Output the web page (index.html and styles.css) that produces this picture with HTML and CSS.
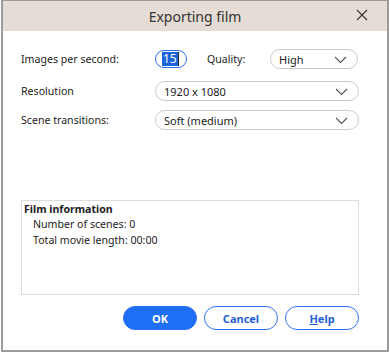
FILE: index.html
```html
<!DOCTYPE html>
<html>
<head>
<meta charset="utf-8">
<link rel="stylesheet" href="styles.css">
</head>
<body>
<div class="dialog">
  <div class="titlebar">
    <span class="title">Exporting film</span>
    <svg class="close" width="12" height="12" viewBox="0 0 12 12"><path d="M1 1L11 11M11 1L1 11" stroke="#333" stroke-width="1.1" fill="none"/></svg>
  </div>
  <div class="content">
    <div class="row first">
      <span class="label">Images per second:</span>
      <div class="fps"><span class="sel">15</span><span class="caret"></span></div>
      <span class="qlabel">Quality:</span>
      <div class="select small"><span>High</span><svg class="chev" width="13" height="8" viewBox="0 0 13 8"><path d="M1 1L6.5 6.5L12 1" stroke="#555" stroke-width="1.1" fill="none"/></svg></div>
    </div>
    <div class="row">
      <span class="label">Resolution</span>
      <div class="select wide"><span>1920 x 1080</span><svg class="chev" width="13" height="8" viewBox="0 0 13 8"><path d="M1 1L6.5 6.5L12 1" stroke="#555" stroke-width="1.1" fill="none"/></svg></div>
    </div>
    <div class="row">
      <span class="label">Scene transitions:</span>
      <div class="select wide"><span>Soft (medium)</span><svg class="chev" width="13" height="8" viewBox="0 0 13 8"><path d="M1 1L6.5 6.5L12 1" stroke="#555" stroke-width="1.1" fill="none"/></svg></div>
    </div>
    <div class="info">
      <div class="info-title">Film information</div>
      <div class="info-line">Number of scenes: 0</div>
      <div class="info-line">Total movie length: 00:00</div>
    </div>
    <div class="buttons">
      <button class="btn primary">OK</button>
      <button class="btn">Cancel</button>
      <button class="btn"><u>H</u>elp</button>
    </div>
  </div>
</div>
</body>
</html>
```
FILE: styles.css
```css
html, body {
  margin: 0;
  padding: 0;
  background: #ffffff;
}
body {
  font-family: "Noto Sans", "Open Sans", sans-serif;
  color: #222;
}
.dialog {
  margin-left: 1px;
  width: 384px;
  height: 349px;
  border: 2px solid #9b9b9b;
  border-top-width: 1px;
  display: flex;
  flex-direction: column;
  background: #fff;
}
.titlebar {
  height: 30px;
  background: #e6dcd6;
  display: flex;
  align-items: center;
  justify-content: center;
  position: relative;
}
.title {
  font-size: 14px;
  color: #333;
  margin-top: 1px;
}
.close {
  position: absolute;
  right: 19px;
  top: 8px;
}
.content {
  padding: 18px 0 0 18px;
  display: flex;
  flex-direction: column;
}
.row {
  display: flex;
  align-items: center;
  height: 20px;
  margin-bottom: 9px;
}
.row.first {
  margin-bottom: 12px;
}
.label {
  width: 134px;
  font-size: 10.6px;
}
.fps {
  height: 16px;
  border: 1.5px solid #2b6ff2;
  border-radius: 10px;
  display: flex;
  align-items: center;
  padding-left: 6px;
  box-sizing: content-box;
  width: 24px;
  font-size: 12px;
}
.sel {
  background: #1a66d9;
  color: #fff;
  line-height: 14px;
  padding: 0 1px;
}
.caret {
  display: inline-block;
  width: 1px;
  height: 14px;
  background: #222;
}
.qlabel {
  font-size: 10.6px;
  margin-left: 20px;
  width: 63px;
}
.select {
  height: 18px;
  border: 1px solid #c9c9c9;
  border-radius: 10px;
  display: flex;
  align-items: center;
  justify-content: space-between;
  padding: 0 10px 0 8px;
  font-size: 11px;
  box-sizing: content-box;
}
.select.small {
  width: 68px;
}
.select.wide {
  width: 184px;
}
.chev {
  margin-top: 1px;
}
.info {
  margin-top: 61px;
  width: 338px;
  height: 95px;
  border: 1px solid #dcdcdc;
  padding: 2px 0 0 2px;
  box-sizing: border-box;
  font-size: 10.6px;
}
.info-title {
  font-weight: bold;
  line-height: 13px;
}
.info-line {
  padding-left: 9px;
  line-height: 16px;
}
.buttons {
  display: flex;
  gap: 7px;
  margin-top: 11px;
  margin-left: 102px;
}
.btn {
  width: 74px;
  height: 24px;
  border-radius: 12px;
  border: 1px solid #2f72f5;
  background: #fff;
  color: #1f5fd6;
  font-family: "Noto Sans", "Open Sans", sans-serif;
  font-size: 11px;
  font-weight: bold;
  padding: 0;
}
.btn.primary {
  background: #1f6ff5;
  color: #fff;
}
```
